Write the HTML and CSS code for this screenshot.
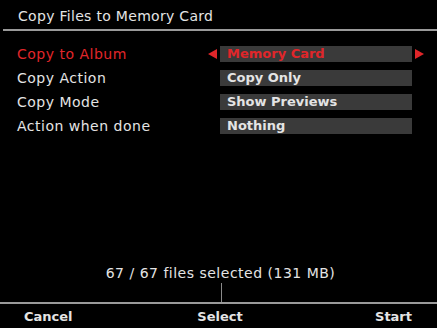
FILE: index.html
```html
<!DOCTYPE html>
<html lang="en">
<head>
    <meta charset="UTF-8">
    <title>Copy Files to Memory Card</title>
    <link rel="stylesheet" href="styles.css">
</head>
<body>
    <div class="screen">
        <div class="header">Copy Files to Memory Card</div>

        <div class="settings">
            <div class="row selected">
                <div class="label">Copy to Album</div>
                <div class="arrow left"></div>
                <div class="value">Memory Card</div>
                <div class="arrow right"></div>
            </div>
            <div class="row">
                <div class="label">Copy Action</div>
                <div class="arrow"></div>
                <div class="value">Copy Only</div>
                <div class="arrow"></div>
            </div>
            <div class="row">
                <div class="label">Copy Mode</div>
                <div class="arrow"></div>
                <div class="value">Show Previews</div>
                <div class="arrow"></div>
            </div>
            <div class="row">
                <div class="label">Action when done</div>
                <div class="arrow"></div>
                <div class="value">Nothing</div>
                <div class="arrow"></div>
            </div>
        </div>

        <div class="summary">67 / 67 files selected (131 MB)</div>
        <div class="tick"></div>

        <div class="footer">
            <div class="key">Cancel</div>
            <div class="key center">Select</div>
            <div class="key end">Start</div>
        </div>
    </div>
</body>
</html>
```

FILE: styles.css
```css
body {
    margin: 0;
    background: #000;
    font-family: 'DejaVu Sans', sans-serif;
    color: #e4e4e4;
}

.screen {
    width: 437px;
    height: 328px;
    display: flex;
    flex-direction: column;
    overflow: hidden;
}

.header {
    height: 31px;
    box-sizing: border-box;
    padding: 8px 0 0 15px;
    margin-left: 3px;
    font-size: 14px;
    letter-spacing: 0.3px;
    border-bottom: 2px solid #9a9a9a;
}

.settings {
    display: flex;
    flex-direction: column;
    gap: 8px;
    margin-top: 15px;
}

.row {
    display: flex;
    align-items: center;
    height: 16px;
}

.label {
    width: 191px;
    padding-left: 17px;
    font-size: 14px;
    letter-spacing: 0.5px;
}

.arrow {
    width: 12px;
    height: 10px;
}

.arrow.left {
    background: #e0262a;
    clip-path: polygon(100% 0, 100% 100%, 0 50%);
    width: 9px;
    margin-right: 3px;
}

.arrow.right {
    background: #e0262a;
    clip-path: polygon(0 0, 0 100%, 100% 50%);
    width: 9px;
    margin-left: 3px;
}

.value {
    width: 192px;
    height: 16px;
    box-sizing: border-box;
    padding-left: 7px;
    background: #3a3a3a;
    font-size: 13px;
    font-weight: bold;
    line-height: 16px;
}

.selected .label,
.selected .value {
    color: #e0262a;
}

.summary {
    margin-top: auto;
    text-align: center;
    font-size: 14px;
    letter-spacing: 0.5px;
    padding-left: 4px;
}

.tick {
    width: 1px;
    height: 19px;
    background: #8a8a8a;
    margin: 2px 0 0 221px;
}

.footer {
    height: 26px;
    box-sizing: border-box;
    display: flex;
    justify-content: space-between;
    border-top: 2px solid #9a9a9a;
    padding: 5px 25px 0 24px;
    font-size: 13px;
    font-weight: bold;
}

.key {
    width: 60px;
}

.key.center {
    text-align: center;
    padding-left: 4px;
}

.key.end {
    text-align: right;
}
```
